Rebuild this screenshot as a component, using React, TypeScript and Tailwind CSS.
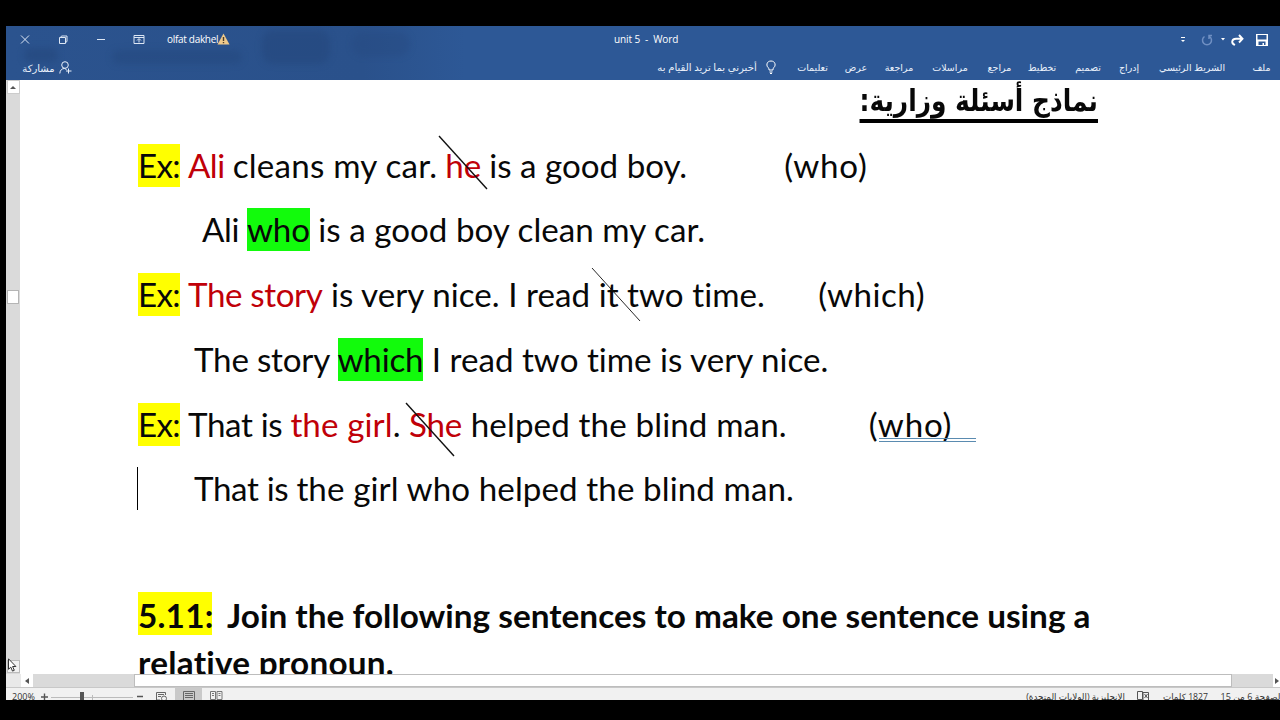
import type { ReactNode } from "react";

const TABS = [
  { label: "ملف", box: "w-[19px] mr-[9px]" },
  { label: "الشريط الرئيسي", box: "w-[70px] mr-[25px]" },
  { label: "إدراج", box: "w-[20px] mr-[18px]" },
  { label: "تصميم", box: "w-[28px] mr-[17px]" },
  { label: "تخطيط", box: "w-[28px] mr-[18px]" },
  { label: "مراجع", box: "w-[25px] mr-[16px]" },
  { label: "مراسلات", box: "w-[38px] mr-[18px]" },
  { label: "مراجعة", box: "w-[30px] mr-[17px]" },
  { label: "عرض", box: "w-[22px] mr-[17px]" },
  { label: "تعليمات", box: "w-[31px] mr-[17px]" },
];

function TitleBar() {
  return (
    <div className="relative flex h-[27px] items-center text-[10px] text-white">
      <div className="flex w-[560px] items-center">
        <svg className="ml-[14px]" width="10" height="10" viewBox="0 0 10 10" stroke="#dce6f4" fill="none">
          <path d="M1 .5l8 8M9 .5l-8 8" />
        </svg>
        <svg className="ml-[28px]" width="10" height="10" viewBox="0 0 10 10" stroke="#dce6f4" fill="none">
          <path d="M1.500 2.500h6v6h-6zM2.500 2.500l1-1.500h5.500v5.500l-1.500 1" />
        </svg>
        <svg className="ml-[28px]" width="10" height="10" viewBox="0 0 10 10" stroke="#dce6f4" fill="none">
          <path d="M1 4.500h8" />
        </svg>
        <svg className="ml-[27px]" width="12" height="10" viewBox="0 0 12 10" stroke="#dce6f4" fill="none">
          <path d="M1 .5h10v8H1zM1 2.500h10M6 7.500V4M4 5.500l2-2 2 2" />
        </svg>
        <span className="ml-[22px] w-[50px] whitespace-nowrap tracking-[-0.3px]">olfat dakhel</span>
        <svg className="-mt-px" width="13" height="12" viewBox="0 0 13 12">
          <path d="M6.500.500L12.500 11.500H.5z" fill="#efc98a" />
          <path d="M5.800 4h1.400v4H5.800zM5.800 9h1.400v1.300H5.800z" fill="#4b3d2c" />
        </svg>
      </div>
      <span className="ml-[48px] whitespace-pre tracking-[-0.1px]">unit 5  -  Word</span>
      <div className="ml-auto flex items-center pr-[12px]">
        <svg className="mr-[-3px]" width="6" height="8" viewBox="0 0 6 8" fill="#fff">
          <path d="M1 1h4v1H1zM1 4h4L3 6z" />
        </svg>
        <svg className="ml-[18px]" width="12" height="12" viewBox="0 0 12 12" fill="none" stroke="#6f8fc2" strokeWidth="1.500">
          <path d="M3.500 2.500A4.500 4.500 0 1 0 8.500 2.500M8 5V1.500h3" />
        </svg>
        <svg className="ml-[7px]" width="6" height="4" viewBox="0 0 6 4" fill="#fff">
          <path d="M1 0h4L3 2.500z" />
        </svg>
        <svg className="ml-[5px]" width="13" height="12" viewBox="0 0 13 12" fill="none" stroke="#fff" strokeWidth="1.900">
          <path d="M4 11C-.5 9 1 4.800 5 4.800h6M8 1l3.500 3.800L8 8.500" />
        </svg>
        <svg className="ml-[12px]" width="12" height="12" viewBox="0 0 12 12">
          <path d="M0 0h12v12H0z" fill="#fff" />
          <path d="M1.500 1h9v4.500h-9zM2.500 7.500h7V11H8V9H6.500v2h-4z" fill="#2d5896" />
        </svg>
      </div>
    </div>
  );
}

function Ribbon() {
  return (
    <div dir="rtl" className="relative flex h-[27px] items-center whitespace-nowrap text-[9.500px] text-[#eaf1fb]">
      {TABS.map((tab) => (
        <span key={tab.label} className={`${tab.box} flex shrink-0 justify-center pt-[3px]`}>
          {tab.label}
        </span>
      ))}
      <svg className="mr-[21px] shrink-0" width="10" height="14" viewBox="0 0 10 14" fill="none" stroke="#fff">
        <path d="M3 10V8.500C-.5 6 .5 1 5 1s5.500 5 2 7.500V10zM3.500 12h3M4 13.500h2" />
      </svg>
      <span className="mr-[9px] flex w-[100px] justify-center pt-[3px] text-[10.150px]">أخبرني بما تريد القيام به</span>
      <div className="mr-auto ml-[16px] flex items-center gap-[4px]">
        <svg className="mt-px" width="13" height="13" viewBox="0 0 13 13" fill="none" stroke="#eaf1fb">
          <circle cx="6" cy="4" r="3.300" />
          <path d="M.8 12.500C1 9 3 7.500 5.500 7.500l2 1M9.500 7.500v5M7 10h5.500" />
        </svg>
        <span className="flex w-[33px] justify-center pt-[3px] text-[10px]">مشاركة</span>
      </div>
    </div>
  );
}

function Mark({ className, children }: { className: string; children: ReactNode }) {
  return <span className={`inline-block h-[43px] ${className}`}>{children}</span>;
}

const YELLOW = "bg-[#ffff00] w-[42px] tracking-[-0.7px]";
const GREEN = "bg-[#12fb0c] tracking-[-0.2px]";

function Strike({ className, width = 1.400 }: { className: string; width?: number }) {
  return (
    <svg className={`absolute ${className}`} width="50" height="55" viewBox="0 0 50 55" stroke="#111" strokeWidth={width}>
      <path d="M1 1l48 53" />
    </svg>
  );
}

function Line({ indent, children }: { indent?: string; children: ReactNode }) {
  return <div className={`flex h-[64.700px] items-start leading-[42.600px] whitespace-pre ${indent ?? ""}`}>{children}</div>;
}

function Page() {
  return (
    <div className="relative min-w-0 flex-1 overflow-hidden bg-white pl-[118px] font-['Lato',sans-serif] text-[33.150px] text-[#080808] [font-variant-ligatures:none]">
      <h1 dir="rtl" className="h-[63.800px] w-[960px] font-['DejaVu_Sans',sans-serif] text-[30px] leading-[42px] font-bold">
        <span className="inline-block h-[43px] origin-right scale-x-[0.828] border-b-[4px] border-black">نماذج أسئلة وزارية:</span>
      </h1>
      <Line>
        <Mark className={YELLOW}>Ex:</Mark>
        <span className="ml-[8px] tracking-[-0.5px] text-[#c00008]">Ali</span>
        <span className="ml-[8px] tracking-[0.230px]">cleans my car.</span>
        <span className="ml-[8px] text-[#c00008]">he</span>
        <span className="ml-[8px]">is a good boy.</span>
        <span className="ml-[97px] tracking-[0.8px]">(who)</span>
      </Line>
      <Line indent="pl-[64px]">
        <span className="tracking-[-0.4px]">Ali </span>
        <Mark className={GREEN}>who</Mark>
        <span className="tracking-[0.03px]"> is a good boy clean my car.</span>
      </Line>
      <Line>
        <Mark className={YELLOW}>Ex:</Mark>
        <span className="ml-[8px] tracking-[-0.38px] text-[#c00008]">The story</span>
        <span className="ml-[8.500px] tracking-[0.04px]">is very nice. I read it two time.</span>
        <span className="ml-[53.500px] tracking-[0.5px]">(which)</span>
      </Line>
      <Line indent="pl-[56px]">
        <span className="tracking-[-0.2px]">The story </span>
        <Mark className={GREEN}>which</Mark>
        <span> I read two time is very nice.</span>
      </Line>
      <Line>
        <Mark className={YELLOW}>Ex:</Mark>
        <span className="ml-[8px] tracking-[-0.35px]">That is </span>
        <span className="tracking-[0.1px] text-[#c00008]">the girl</span>
        <span>. </span>
        <span className="tracking-[-0.2px] text-[#c00008]">She</span>
        <span className="tracking-[0.14px]"> helped the blind man.</span>
        <span className="ml-[82px] tracking-[0.8px]">(who)</span>
      </Line>
      <Line indent="pl-[56px]">
        <span className="tracking-[-0.35px]">That is </span>
        <span className="tracking-[0.1px]">the girl who helped the blind man.</span>
      </Line>
      <div className="mt-[60.500px] text-[33.300px] leading-[46px] font-bold whitespace-pre">
        <div className="flex h-[46.500px]">
          <Mark className="w-[74px] bg-[#ffff00] tracking-[0.2px]">5.11:</Mark>
          <span className="ml-[15px] tracking-[0.02px]">Join the following sentences to make one sentence using a</span>
        </div>
        <div className="tracking-[0.25px]">relative pronoun.</div>
      </div>
      <Strike className="top-[55px] left-[418px]" />
      <Strike className="top-[187px] left-[571px]" width={0.900} />
      <Strike className="top-[322px] left-[385px]" />
      <div className="absolute top-[358px] left-[859px] h-[4px] w-[97px] border-y border-[#5a8bb0]" />
      <div className="absolute top-[387px] left-[117px] h-[43px] w-px bg-black" />
    </div>
  );
}

function SideScroll() {
  return (
    <div className="flex w-[14px] shrink-0 flex-col items-center bg-[#dadada]">
      <div className="flex h-[14px] w-[13px] items-center justify-center border border-[#ccc] bg-white">
        <svg width="6" height="4" fill="#555"><path d="M0 4l3-3 3 3z" /></svg>
      </div>
      <div className="mt-[196px] h-[14px] w-[12px] border border-[#b5b5b5] bg-white" />
      <div className="mt-auto mb-px h-[13px] w-[13px] border border-[#bbb] bg-[#f2f2f2]" />
    </div>
  );
}

function BottomScroll() {
  return (
    <div className="flex h-[14px] items-stretch border-b border-[#c8c8c8] bg-[#dadada]">
      <div className="w-[15px] bg-[#e9e9e9]" />
      <div className="flex w-[12px] items-center justify-center bg-white">
        <svg width="4" height="6" fill="#555"><path d="M4 0v6L0 3z" /></svg>
      </div>
      <div className="ml-[101px] w-[1098px] border border-[#bdbdbd] bg-white" />
      <div className="ml-auto flex w-[7px] items-center justify-center bg-white">
        <svg width="4" height="6" fill="#555"><path d="M0 0v6l4-3z" /></svg>
      </div>
    </div>
  );
}

function StatusBar() {
  return (
    <div className="flex h-[12px] items-start overflow-hidden bg-[#f1f1f1] text-[9px] leading-[18px] text-[#333]">
      <span className="ml-[6px] w-[23px]">200%</span>
      <svg className="ml-[5px]" width="108" height="12" viewBox="0 0 108 12" stroke="#555" fill="none">
        <path d="M1 9h7M4.500 5.500v7M97 8.500h6" strokeWidth="1.400" />
        <path d="M11 9.500h82M52.500 7v5" stroke="#bbb" />
        <path d="M40 4h4v9h-4z" fill="#555" stroke="none" />
      </svg>
      <svg className="ml-[7px]" width="13" height="12" viewBox="0 0 13 12" stroke="#666" fill="none">
        <path d="M5 12H1.500V4.500h9V7M3 6.500h6M3 8.500h3" />
        <circle cx="9" cy="10.500" r="2.500" />
      </svg>
      <div className="ml-[7px] flex h-[12px] w-[27px] justify-center bg-[#c9c9c9]">
        <svg width="12" height="12" viewBox="0 0 12 12" stroke="#666" fill="none">
          <path d="M.5 3.500h11v10H.5zM2 5.500h8M2 7.500h8M2 9.500h8" />
        </svg>
      </div>
      <svg className="ml-[8px]" width="13" height="12" viewBox="0 0 13 12" stroke="#777" fill="none">
        <path d="M.5 3.500h5v8h-5zM7 3.500h5v8H7zM2 5.500h2M2 7.500h2M8.500 5.500h2M8.500 7.500h2" />
      </svg>
      <div dir="rtl" className="ml-auto flex whitespace-nowrap">
        <span className="-mr-[3px] w-[61px]">الصفحة 6 من 15</span>
        <span className="mr-[14px] w-[44px] text-[8.700px]">1827 كلمات</span>
        <svg className="mr-[14px]" width="13" height="12" viewBox="0 0 13 12" stroke="#555" fill="none">
          <path d="M.5 3.500h5v8h-5zM6 4.500h5.500v8H6zM7.500 6l3 4M10.500 6l-3 4" />
        </svg>
        <span className="mr-[12px] ml-[152px] w-[98px] text-[8.800px]">الإنجليزية (الولايات المتحدة)</span>
      </div>
    </div>
  );
}

export default function App() {
  return (
    <div className="h-[720px] w-[1280px] overflow-hidden bg-black pt-[26px] pl-[6px] font-['Open_Sans','DejaVu_Sans',sans-serif]">
      <div className="relative flex h-[674px] flex-col overflow-hidden bg-white">
        <header className="relative h-[54px] shrink-0 overflow-hidden bg-[linear-gradient(90deg,#2b538e_0,#2a518b_28%,#2d5896_36%,#2d5896_100%)]">
          <div className="absolute top-[4px] left-[256px] h-[34px] w-[68px] rounded-xl bg-[#24477d]/60 blur-[3px]" />
          <div className="absolute top-[24px] left-[106px] h-[14px] w-[130px] rounded-full bg-[#24477d]/50 blur-[3px]" />
          <div className="absolute top-[22px] left-[18px] h-[14px] w-[34px] rounded-full bg-[#24477d]/60 blur-[3px]" />
          <div className="absolute top-[6px] left-[346px] h-[24px] w-[58px] rounded-xl bg-[#24477d]/35 blur-[3px]" />
          <TitleBar />
          <Ribbon />
        </header>
        <div className="flex min-h-0 flex-1">
          <SideScroll />
          <Page />
        </div>
        <BottomScroll />
        <StatusBar />
        <svg className="absolute top-[632px] left-[2px]" width="10" height="14" viewBox="0 0 10 14" fill="#fff" stroke="#333">
          <path d="M.5.800v10.500l2.300-2.200 1.700 4 1.800-.8-1.700-3.800h3.300z" />
        </svg>
      </div>
    </div>
  );
}
